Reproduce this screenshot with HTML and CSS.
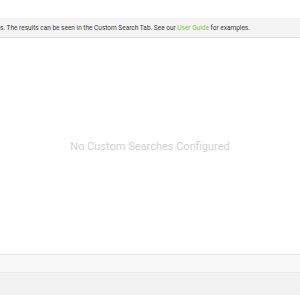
FILE: index.html
```html
<!DOCTYPE html>
<html lang="en">
<head>
    <meta charset="UTF-8">
    <title>Custom Searches</title>
    <link rel="stylesheet" href="styles.css">
</head>
<body>
<div id="page">
    <div class="info-bar">
        <p class="info-text">s. The results can be seen in the Custom Search Tab. See our <a href="#">User Guide</a> for examples.</p>
    </div>
    <div class="empty">
        <span>No Custom Searches Configured</span>
    </div>
    <div class="footer-bar"></div>
    <div class="footer-base"></div>
</div>
</body>
</html>
```

FILE: styles.css
```css
* {
    margin: 0;
    padding: 0;
}

body {
    background-color: #fff;
    font-family: Roboto, "Liberation Sans", sans-serif;
}

#page {
    display: flex;
    flex-direction: column;
    height: 300px;
    padding-top: 18px;
    box-sizing: border-box;
}

.info-bar {
    display: flex;
    align-items: center;
    height: 19px;
    background-color: #f4f4f4;
    border-bottom: 1px solid #e2e2e2;
}

.info-text {
    white-space: nowrap;
    font-size: 6.5px;
    color: #3a3a3a;
}

.info-text a {
    color: #8cc152;
    text-decoration: none;
}

.empty {
    flex: 1;
    display: flex;
    justify-content: center;
    align-items: center;
    font-size: 11px;
    color: #d2d2d2;
}

.footer-bar {
    height: 17px;
    background-color: #f8f8f8;
    border-top: 1px solid #e4e4e4;
    border-bottom: 1px solid #e8e8e8;
}

.footer-base {
    height: 22px;
    margin-bottom: 5px;
    background-color: #f2f2f2;
}
```
